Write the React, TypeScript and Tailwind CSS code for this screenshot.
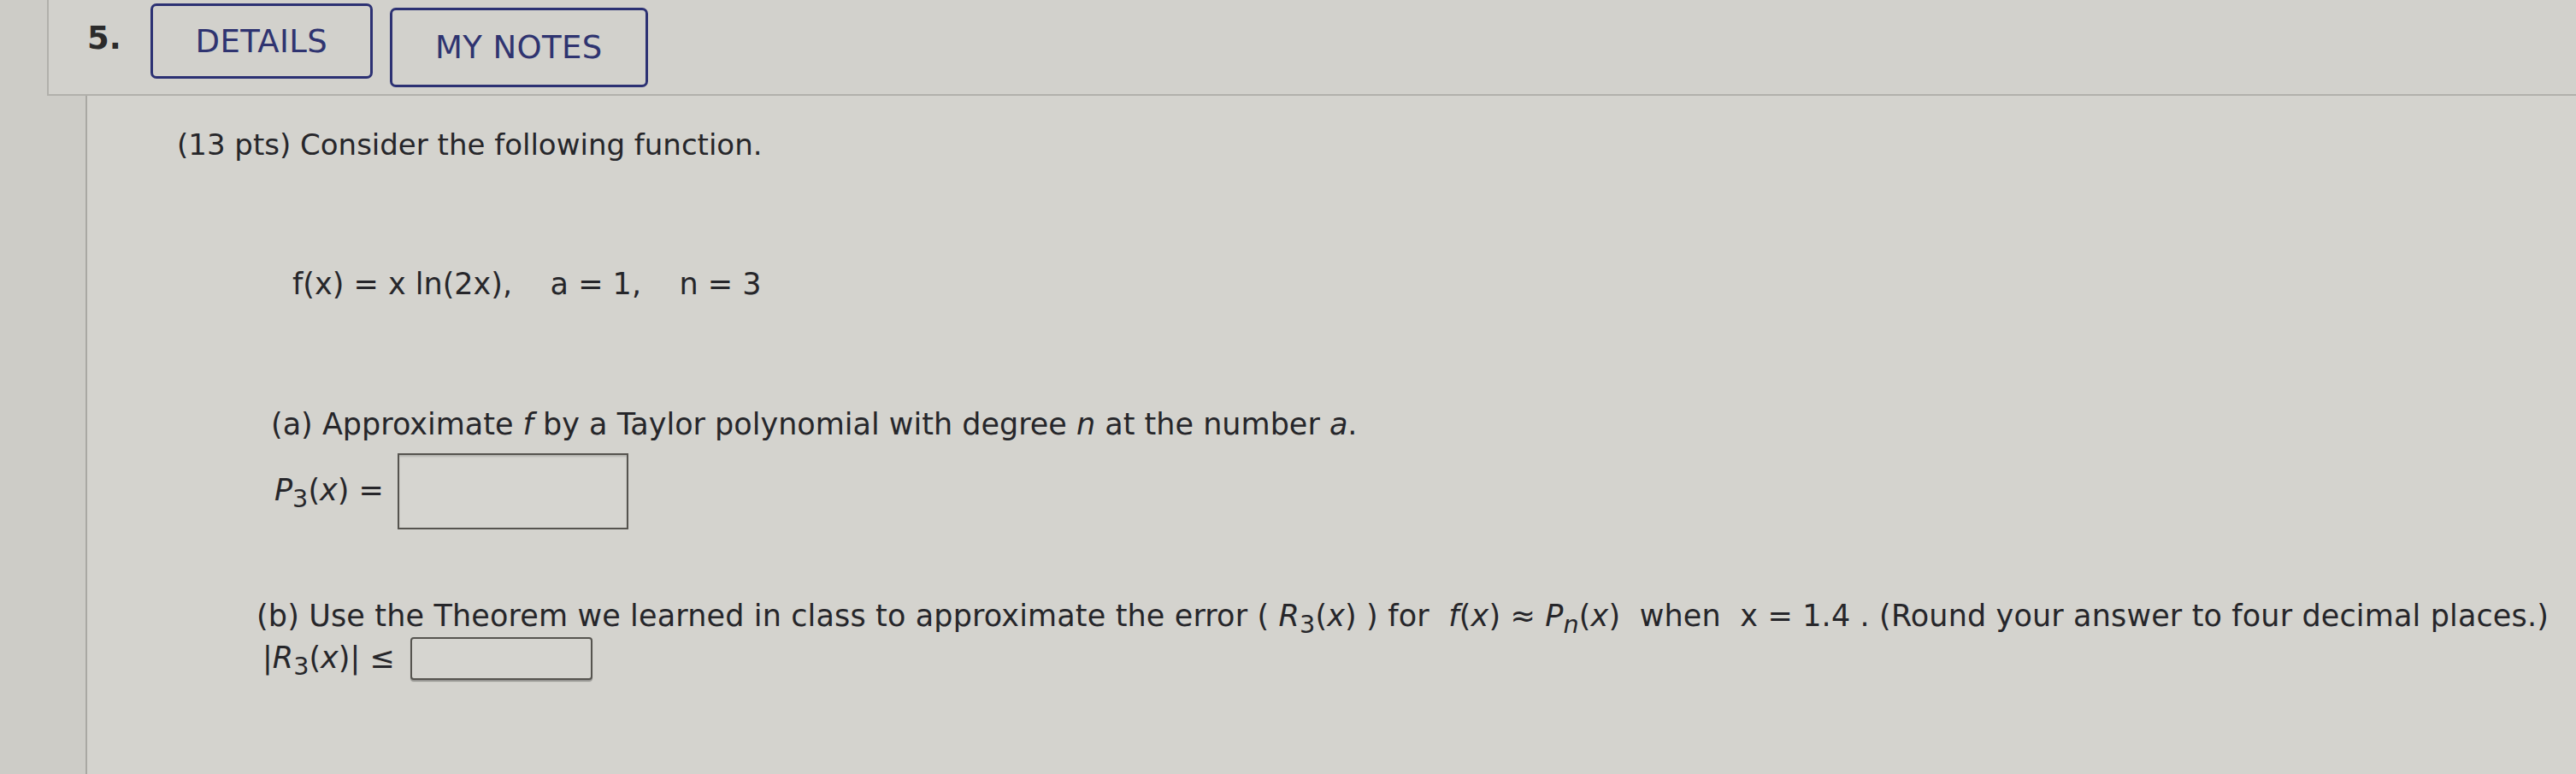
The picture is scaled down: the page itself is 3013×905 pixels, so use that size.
import React from "react";

function Sub({ children, italic = false }: { children: React.ReactNode; italic?: boolean }) {
  return (
    <span className={`relative top-[0.28em] text-[0.82em] ${italic ? "italic" : "not-italic"}`}>
      {children}
    </span>
  );
}

function TabButton({ label, className = "" }: { label: string; className?: string }) {
  return (
    <button
      type="button"
      className={`flex items-center justify-center rounded-[7px] border-[3px] border-[#2c3173] bg-transparent text-[37px] leading-none tracking-[0.01em] text-[#2f3470] ${className}`}
    >
      {label}
    </button>
  );
}

export default function App() {
  return (
    <div
      className="relative h-[905px] w-[3013px] overflow-hidden bg-[#cdccc7] text-[#26262a]"
      style={{ fontFamily: '"DejaVu Sans", Verdana, sans-serif' }}
    >
      {/* question header band */}
      <div className="ml-[55px] flex h-[112px] items-start border-b-2 border-l-2 border-[#b1b0ab] bg-[#d2d1cc] pl-[45px]">
        <span className="mt-[26px] text-[37px] font-bold leading-none text-[#2b2b2b]">5.</span>
        <div className="ml-[34px] flex items-start gap-[20px]">
          <TabButton label="DETAILS" className="mt-[4px] h-[88px] w-[260px]" />
          <TabButton label="MY NOTES" className="mt-[9px] h-[93px] w-[302px]" />
        </div>
      </div>

      {/* question body */}
      <div className="ml-[100px] flex h-[793px] flex-col border-l-2 border-[#a9a8a3] bg-[#d4d3ce] text-[35px] leading-[41px]">
        <p className="mt-[37px] pl-[105px] text-[34px]">(13 pts) Consider the following function.</p>

        <p className="mt-[122px] whitespace-pre pl-[240px]">
          {"f(x) = x ln(2x),    a = 1,    n = 3"}
        </p>

        <p className="mt-[123px] pl-[215px]">
          (a) Approximate <i>f</i> by a Taylor polynomial with degree <i>n</i> at the number <i>a</i>.
        </p>

        <div className="mt-[13px] flex items-center pl-[219px]">
          <span className="whitespace-pre">
            <i>P</i>
            <Sub>3</Sub>(<i>x</i>) =
          </span>
          <div className="ml-[16px] h-[89px] w-[270px] border-2 border-[#56544f] bg-[#d6d5d0] shadow-[inset_0_2px_2px_rgba(0,0,0,0.15)]" />
        </div>

        <p className="mt-[81px] whitespace-pre pl-[198px] tracking-[0.004em]">
          {"(b) Use the Theorem we learned in class to approximate the error ( "}
          <i>R</i>
          <Sub>3</Sub>(<i>x</i>)
          {" ) for  "}
          <i>f</i>(<i>x</i>){" ≈ "}
          <i>P</i>
          <Sub italic>n</Sub>(<i>x</i>)
          {"  when  x = 1.4 . (Round your answer to four decimal places.)"}
        </p>

        <div className="mt-[2px] flex items-center pl-[205px]">
          <span className="whitespace-pre">
            |<i>R</i>
            <Sub>3</Sub>(<i>x</i>)| ≤
          </span>
          <div className="ml-[18px] h-[50px] w-[213px] rounded-[4px] border-2 border-[#56544f] bg-[#d6d5d0] shadow-[0_2px_1px_rgba(0,0,0,0.3)]" />
        </div>
      </div>
    </div>
  );
}
